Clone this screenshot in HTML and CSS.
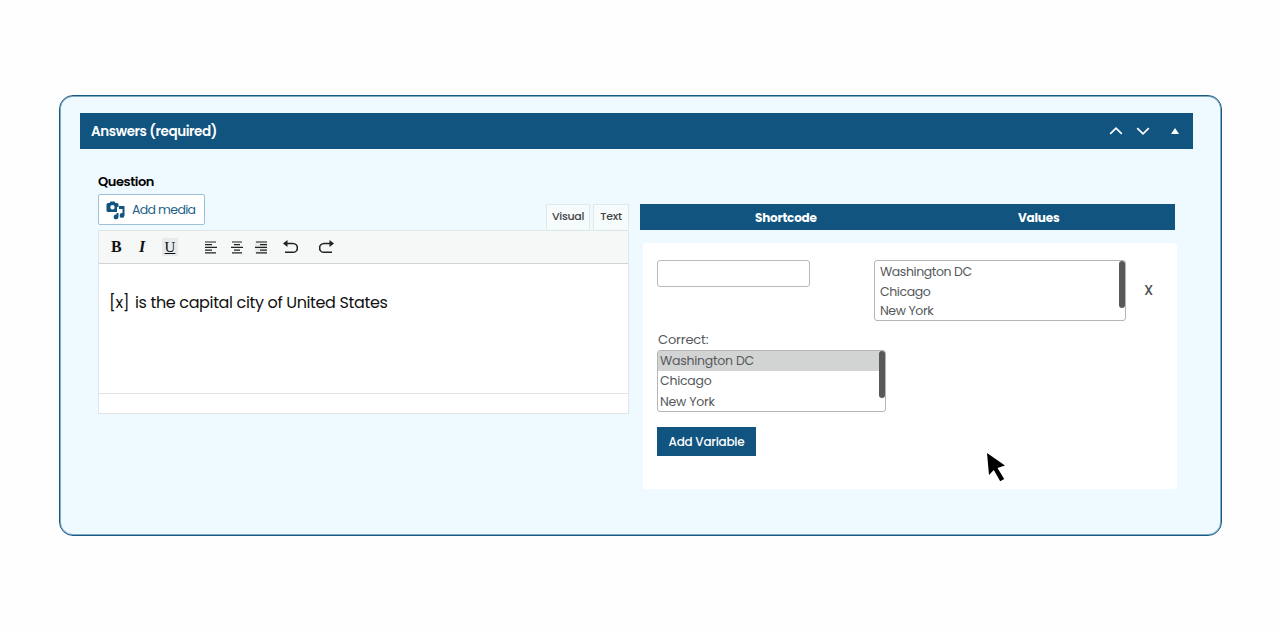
FILE: index.html
```html
<!DOCTYPE html>
<html lang="en">
<head>
    <meta charset="UTF-8">
    <meta name="viewport" content="width=device-width, initial-scale=1.0">
    <title>Answers</title>
    <link rel="stylesheet" href="styles.css">
</head>
<body>
    <div class="card">
        <div class="card-header">
            <span class="card-title">Answers (required)</span>
            <div class="header-icons">
                <svg width="14" height="8" viewBox="0 0 14 8"><path d="M1.2 6.8L7 1.2l5.8 5.6"/></svg>
                <svg width="14" height="8" viewBox="0 0 14 8"><path d="M1.2 1.2L7 6.8l5.8-5.6"/></svg>
                <svg class="toggle" width="8" height="6" viewBox="0 0 8 6"><path d="M4 0l4 6H0z"/></svg>
            </div>
        </div>

        <div class="columns">
            <!-- Question editor -->
            <div class="question">
                <div class="question-label">Question</div>
                <div class="media-row">
                    <button class="media-button">
                        <svg width="20" height="19" viewBox="0 0 20 19">
                            <path fill-rule="evenodd" d="M3.500 2l1-1.500h4L9.500 2H11q1.500 0 1.500 1.500V6H11v5H2q-1.500 0-1.500-1.500V3.500Q.5 2 2 2zM6.500 4.100a2.200 2.200 0 1 0 0 4.400a2.200 2.200 0 1 0 0-4.400z"/>
                            <path d="M13 5h5.500v9.500a2.400 2.400 0 1 1-2-2.400V8H13zM10.500 12h2V16a2.400 2.400 0 1 1-2-2.400z"/>
                        </svg>
                        <span>Add media</span>
                    </button>
                    <div class="tabs">
                        <span class="tab tab-visual">Visual</span>
                        <span class="tab tab-text">Text</span>
                    </div>
                </div>
                <div class="editor">
                    <div class="toolbar">
                        <span class="tool bold">B</span>
                        <span class="tool italic">I</span>
                        <span class="tool underline">U</span>
                        <svg class="align-left" width="12" height="13" viewBox="0 0 12 13"><path d="M0 1h11M0 3.700h7M0 6.400h12M0 9.100h7M0 11.800h11"/></svg>
                        <svg class="align-center" width="12" height="13" viewBox="0 0 12 13"><path d="M1 1h10M3 3.700h6M0 6.400h12M3 9.100h6M1 11.800h10"/></svg>
                        <svg class="align-right" width="12" height="13" viewBox="0 0 12 13"><path d="M1 1h11M5 3.700h7M0 6.400h12M5 9.100h7M1 11.800h11"/></svg>
                        <svg class="undo" width="15" height="14" viewBox="0 0 15 14"><path d="M3 3.500h7a4.400 4.400 0 0 1 0 8.800H2"/><path class="solid" d="M0 3.500L4.500 0v7z"/></svg>
                        <svg class="redo" width="15" height="14" viewBox="0 0 15 14"><path d="M11 3.500H5a4.400 4.400 0 0 0 0 8.800h8"/><path class="solid" d="M15 3.500L10.500 0v7z"/></svg>
                    </div>
                    <div class="editor-body"><span class="variable">[x]</span><span class="sentence">is the capital city of United States</span></div>
                    <div class="editor-footer"></div>
                </div>
            </div>

            <!-- Variables -->
            <div class="variables">
                <div class="variables-header">
                    <span class="col-shortcode">Shortcode</span>
                    <span class="col-values">Values</span>
                </div>
                <div class="variables-body">
                    <div class="variable-row">
                        <input type="text" class="shortcode-input">
                        <div class="list values-list">
                            <div class="option">Washington DC</div>
                            <div class="option">Chicago</div>
                            <div class="option">New York</div>
                            <div class="scrollbar"></div>
                        </div>
                        <span class="remove">X</span>
                    </div>
                    <div class="correct-label">Correct:</div>
                    <div class="list correct-list">
                        <div class="option selected">Washington DC</div>
                        <div class="option">Chicago</div>
                        <div class="option">New York</div>
                        <div class="scrollbar"></div>
                    </div>
                    <button class="add-button">Add Variable</button>
                </div>
            </div>
        </div>
    </div>

    <svg class="cursor" width="19" height="30" viewBox="0 0 19 30"><path d="M0 0l18 12.500-7.500 2.500 6.700 11-4 2.300L6.800 17 2 22z"/></svg>
</body>
</html>
```
FILE: styles.css
```css
* {
    margin: 0;
    padding: 0;
    box-sizing: border-box;
}

body {
    font-family: Poppins, Inter, sans-serif;
    background-color: #fefefe;
    height: 632px;
    padding: 95px 58px 0 59px;
    overflow: hidden;
}

.card {
    width: 1163px;
    height: 441px;
    padding: 17px 28px 0 20px;
    border: 1px solid #165a85;
    border-radius: 14px;
    box-shadow: inset 0 0 0 1px rgba(22, 90, 133, 0.5);
    background-color: #eefaff;
}

.card-header {
    display: flex;
    justify-content: space-between;
    align-items: center;
    height: 36px;
    padding: 0 14px 0 11px;
    background-color: #10547f;
    color: #fff;
}

.card-title {
    padding-top: 2px;
    font-size: 13.5px;
    font-weight: 600;
    letter-spacing: -0.42px;
}

.header-icons {
    display: flex;
    align-items: center;
    gap: 13px;
}

.header-icons svg {
    fill: none;
    stroke: #fff;
    stroke-width: 1.7;
}

.header-icons .toggle {
    margin-left: 8px;
    fill: #fff;
    stroke: none;
}

.columns {
    display: flex;
    align-items: flex-start;
}

.question {
    width: 531px;
    margin-left: 18px;
    padding-top: 23px;
}

.question-label {
    height: 22px;
    line-height: 19px;
    font-size: 13px;
    font-weight: 600;
    letter-spacing: -0.45px;
    color: #000;
}

.media-row {
    display: flex;
    justify-content: space-between;
    height: 36px;
}

.media-button {
    display: flex;
    align-items: center;
    gap: 6px;
    width: 107px;
    height: 31px;
    padding-left: 7px;
    border: 1px solid #9dc0d4;
    border-radius: 2px;
    background-color: #fff;
    color: #1e5f88;
    font-family: inherit;
    font-size: 12.5px;
    letter-spacing: -0.65px;
    white-space: nowrap;
}

.media-button svg {
    flex: none;
    margin-top: 2px;
    fill: #10547f;
}

.tabs {
    display: flex;
    gap: 3px;
    height: 25px;
    margin-top: 10px;
}

.tab {
    height: 25px;
    line-height: 22px;
    border: 1px solid #e2e7e9;
    border-bottom: none;
    background-color: #f6fbfc;
    color: #454545;
    font-size: 11px;
    font-weight: 500;
    letter-spacing: -0.3px;
    text-align: center;
}

.tab-visual {
    width: 44px;
}

.tab-text {
    width: 36px;
}

.editor {
    height: 184px;
    border: 1px solid #e2e5e6;
    background-color: #fff;
}

.toolbar {
    display: flex;
    align-items: center;
    height: 33px;
    padding-left: 12px;
    border-bottom: 1px solid #d0d2d3;
    background-color: #f6f7f7;
}

.tool {
    width: 16px;
    font-family: "Liberation Serif", serif;
    font-size: 16px;
    line-height: 18px;
    color: #111;
}

.bold {
    font-weight: bold;
}

.italic {
    margin-left: 12px;
    font-style: italic;
    font-weight: bold;
}

.underline {
    margin-left: 7px;
    background-color: #e7eaeb;
    text-align: center;
    text-decoration: underline;
    font-size: 15px;
}

.toolbar svg {
    fill: none;
    stroke: #222;
    stroke-width: 1.2;
}

.toolbar .solid {
    fill: #222;
    stroke: none;
}

.align-left {
    margin-left: 27px;
}

.align-center {
    margin-left: 14px;
}

.align-right {
    margin-left: 12px;
    background-color: #e7eaeb;
}

.undo {
    margin-left: 16px;
}

.redo {
    margin-left: 21px;
}

.toolbar .undo,
.toolbar .redo {
    stroke-width: 1.6;
}

.editor-body {
    display: flex;
    height: 130px;
    padding: 27px 0 0 10px;
    border-bottom: 1px solid #e2e2e2;
    color: #111;
    font-size: 16px;
    line-height: 24px;
    letter-spacing: -0.36px;
}

.variable {
    width: 26px;
}

.variables {
    width: 537px;
    margin-left: 11px;
    padding-top: 55px;
}

.variables-header {
    display: flex;
    width: 535px;
    height: 26px;
    line-height: 27px;
    background-color: #10547f;
    color: #fff;
    font-size: 12px;
    font-weight: 700;
    letter-spacing: -0.2px;
}

.col-shortcode {
    width: 263px;
    padding-left: 115px;
}

.col-values {
    padding-left: 115px;
}

.variables-body {
    width: 534px;
    height: 246px;
    margin: 13px 0 0 3px;
    padding: 17px 0 0 14px;
    background-color: #fff;
    border-radius: 3px;
}

.variable-row {
    display: flex;
    align-items: flex-start;
    height: 71px;
}

.shortcode-input {
    width: 153px;
    height: 27px;
    border: 1px solid #b9b9b9;
    border-radius: 3px;
}

.list {
    position: relative;
    border: 1px solid #b4b5b6;
    border-radius: 3px;
    background-color: #fff;
    color: #55585a;
    font-size: 12.5px;
}

.values-list {
    width: 252px;
    height: 61px;
    margin-left: 64px;
    letter-spacing: -0.42px;
}

.values-list .option {
    height: 19.7px;
    line-height: 21px;
    padding-left: 5px;
}

.scrollbar {
    position: absolute;
    top: 0;
    right: 0;
    width: 6px;
    height: 47px;
    border-radius: 3px;
    background-color: #58595b;
}

.remove {
    margin: 20px 0 0 18px;
    line-height: 20px;
    font-size: 14px;
    font-weight: 500;
    color: #4a4c4e;
}

.correct-label {
    height: 19px;
    padding-left: 1px;
    line-height: 18px;
    font-size: 13px;
    letter-spacing: -0.15px;
    color: #55585a;
}

.correct-list {
    width: 229px;
    height: 62px;
    letter-spacing: -0.24px;
}

.correct-list .option {
    height: 20.300px;
    line-height: 20px;
    padding-left: 2px;
}

.selected {
    background-color: #d2d3d3;
}

.add-button {
    display: block;
    width: 99px;
    height: 29px;
    margin-top: 15px;
    padding-bottom: 1px;
    border: none;
    background-color: #10547f;
    color: #fff;
    font-family: inherit;
    font-size: 12px;
    font-weight: 500;
    letter-spacing: -0.25px;
    line-height: 27px;
}

/* Mouse pointer over the panel */
.cursor {
    position: absolute;
    left: 987px;
    top: 453px;
    fill: #000;
}
```
